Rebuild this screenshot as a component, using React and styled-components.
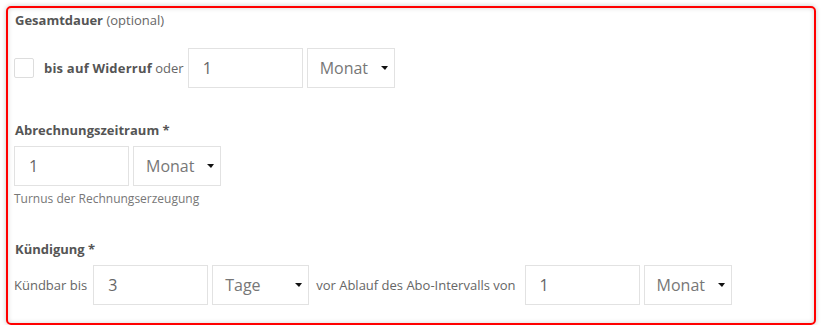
import React from 'react';
import { styled, createGlobalStyle } from 'styled-components';

const GlobalStyle = createGlobalStyle`
  body {
    margin: 0;
    background: #fff;
    font-family: "Open Sans", "Noto Sans", sans-serif;
  }
`;

const Panel = styled.div`
  margin: 6px 13px 0 6px;
  height: 319px;
  box-sizing: border-box;
  border: 2px solid #ff0000;
  border-radius: 5px;
  padding: 4px 6px 0 6px;
  box-shadow: 0 0 5px rgba(0, 0, 0, 0.22), inset 0 0 5px rgba(0, 0, 0, 0.16);
  display: flex;
  flex-direction: column;
`;

const Label = styled.div`
  font-size: 13px;
  line-height: 16px;
  font-weight: 700;
  color: #555;
  margin: ${(p) => p.$top}px 0 0 1px;
`;

const Hint = styled.span`
  font-weight: 400;
  color: #666;
`;

const Row = styled.div`
  display: flex;
  align-items: center;
  margin-top: ${(p) => p.$top}px;
`;

const Checkbox = styled.span`
  width: 18px;
  height: 18px;
  border: 1px solid #ddd;
  border-radius: 2px;
  margin-right: 10px;
`;

const Text = styled.span`
  font-size: 13px;
  color: #666;
  margin: 0 ${(p) => p.$right ?? 6}px 0 ${(p) => p.$left ?? 0}px;
  white-space: nowrap;
  b {
    color: #555;
    letter-spacing: 0.2px;
  }
`;

const Input = styled.input`
  width: 115px;
  height: 40px;
  box-sizing: border-box;
  border: 1px solid #e2e2e2;
  padding: 0 14px;
  font-family: inherit;
  font-size: 16px;
  color: #666;
  outline: none;
  margin-right: 4px;
`;

const Select = styled.div`
  width: ${(p) => p.$width}px;
  height: 40px;
  box-sizing: border-box;
  border: 1px solid #e2e2e2;
  padding: 0 12px;
  display: flex;
  align-items: center;
  justify-content: space-between;
  font-size: 16px;
  color: #777;
  &::after {
    content: "";
    border-left: 4px solid transparent;
    border-right: 3px solid transparent;
    border-top: 4px solid #111;
    margin-right: -6px;
  }
`;

const HelpText = styled.div`
  font-size: 12px;
  line-height: 16px;
  color: #777;
  margin-top: 5px;
`;

const App = () => {
  return (
    <>
      <GlobalStyle />
      <Panel>
        <Label $top={0}>
          Gesamtdauer <Hint>(optional)</Hint>
        </Label>
        <Row $top={20}>
          <Checkbox />
          <Text $right={4}>
            <b>bis auf Widerruf</b> oder
          </Text>
          <Input defaultValue="1" />
          <Select $width={88}>Monat</Select>
        </Row>
        <Label $top={34}>Abrechnungszeitraum *</Label>
        <Row $top={8}>
          <Input defaultValue="1" />
          <Select $width={88}>Monat</Select>
        </Row>
        <HelpText>Turnus der Rechnungserzeugung</HelpText>
        <Label $top={34}>Kündigung *</Label>
        <Row $top={8}>
          <Text $right={6}>Kündbar bis</Text>
          <Input defaultValue="3" />
          <Select $width={97}>Tage</Select>
          <Text $left={7} $right={9}>vor Ablauf des Abo-Intervalls von</Text>
          <Input defaultValue="1" />
          <Select $width={88}>Monat</Select>
        </Row>
      </Panel>
    </>
  );
};

export default App;
